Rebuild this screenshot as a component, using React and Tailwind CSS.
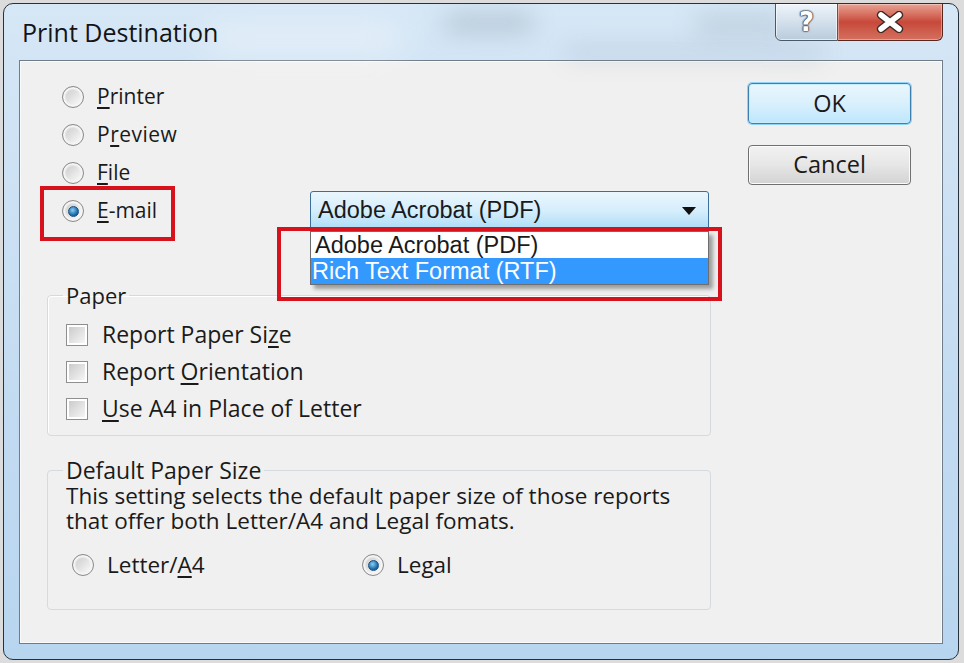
import React from "react";

const Radio = ({ checked }) => (
  <span className="relative inline-flex h-[22px] w-[22px] shrink-0 items-center justify-center rounded-full border border-[#8a8a8a] bg-gradient-to-br from-[#d8d8d8] to-[#fbfbfb] shadow-[inset_0_0_0_2px_#f4f4f4]">
    <span className="h-[14px] w-[14px] rounded-full bg-gradient-to-br from-[#cfcfcf] to-[#f7f7f7]" />
    {checked && (
      <span className="absolute h-[11px] w-[11px] rounded-full bg-[radial-gradient(circle_at_40%_35%,#8ad0f5,#1f6fae_60%,#0f3f70)] border border-[#1b4f82]" />
    )}
  </span>
);

const Check = () => (
  <span className="inline-flex h-[22px] w-[22px] shrink-0 items-center justify-center border border-[#8e8f8f] bg-white">
    <span className="h-[16px] w-[16px] bg-gradient-to-br from-[#cbcbcb] to-[#f6f6f6]" />
  </span>
);

const U = ({ children }) => <span className="underline underline-offset-[3px]">{children}</span>;

export default function App() {
  return (
    <div className="h-[663px] w-[964px] bg-[#dcdcdc] p-[3px] font-['Open_Sans',sans-serif] text-[21px] text-[#1a1a1a]">
      <div className="relative flex h-[657px] w-[956px] flex-col overflow-hidden rounded-[10px] border border-[#26313b] bg-gradient-to-b from-[#d6e7f6] via-[#c6ddf2] to-[#b8d5ef]">
        {/* blurred glass background */}
        <div className="pointer-events-none absolute left-[440px] top-[12px] h-[14px] w-[90px] rounded-full bg-[#6c7c8a] opacity-40 blur-md" />
        <div className="pointer-events-none absolute left-[690px] top-[14px] h-[12px] w-[90px] rounded-full bg-[#6c7c8a] opacity-35 blur-md" />
        <div className="pointer-events-none absolute left-[560px] top-[44px] h-[10px] w-[260px] rounded-full bg-[#7b8da0] opacity-30 blur-md" />
        <div className="pointer-events-none absolute left-[200px] top-[20px] h-[30px] w-[200px] rounded-full bg-white opacity-40 blur-lg" />

        {/* title bar */}
        <div className="relative h-[56px] shrink-0">
          <div className="ml-[18px] mt-[13px] text-[25px] leading-[30px] text-[#141414]">Print Destination</div>
          <div className="absolute right-[15px] top-[-1px] flex h-[38px]">
            <div className="flex w-[63px] items-center justify-center rounded-bl-[6px] border border-[#4b5a68] bg-gradient-to-b from-[#eef4fa] via-[#d3e0ec] to-[#b9cbdb] shadow-[inset_0_0_0_1px_rgba(255,255,255,0.6)]">
              <span className="font-['DejaVu_Sans',sans-serif] text-[26px] font-bold leading-none text-white [text-shadow:0_0_1px_#2d3a46,0_0_1px_#2d3a46,0_0_2px_#2d3a46,0_0_2px_#2d3a46]">?</span>
            </div>
            <div className="flex w-[105px] items-center justify-center rounded-br-[6px] border border-l-0 border-[#5a2620] bg-gradient-to-b from-[#e8a293] via-[#c7483a] to-[#d4705e] shadow-[inset_0_0_0_1px_rgba(255,255,255,0.35)]">
              <svg width="34" height="22" viewBox="0 0 34 22">
                <path d="M8 4 L26 18 M26 4 L8 18" stroke="#3b2a28" strokeWidth="8.5" strokeLinecap="round" />
                <path d="M8 4 L26 18 M26 4 L8 18" stroke="#ffffff" strokeWidth="5.5" strokeLinecap="round" />
              </svg>
            </div>
          </div>
        </div>

        {/* client area */}
        <div className="mx-[15px] mb-[15px] flex-1 border border-[#6f7d8a] bg-[#f0f0f0] shadow-[inset_0_0_0_1px_#fafafa]">
          <div className="flex items-start">
            <div className="flex-1 pl-[42px] pt-[17px]">
              <div className="flex h-[38px] items-center gap-[13px]">
                <Radio />
                <span>
                  <U>P</U>rinter
                </span>
              </div>
              <div className="flex h-[38px] items-center gap-[13px]">
                <Radio />
                <span className="tracking-[0.5px]">
                  P<U>r</U>eview
                </span>
              </div>
              <div className="flex h-[38px] items-center gap-[13px]">
                <Radio />
                <span>
                  <U>F</U>ile
                </span>
              </div>
              <div className="relative flex h-[38px] items-center">
                <div className="absolute left-[-22px] top-[-6px] h-[55px] w-[135px] border-[4px] border-[#d8121c]" />
                <div className="flex w-[248px] items-center gap-[13px]">
                  <Radio checked />
                  <span>
                    <U>E</U>-mail
                  </span>
                </div>
                <div className="relative">
                  <div className="flex h-[40px] w-[399px] items-center justify-between rounded-[3px] border border-[#3c6f98] bg-gradient-to-b from-[#eaf6fd] via-[#d5eefc] to-[#a9dbf6] pl-[7px] pr-[12px] font-['Liberation_Sans',sans-serif] text-[23.5px]">
                    <span>Adobe Acrobat (PDF)</span>
                    <svg width="14" height="8" viewBox="0 0 14 8">
                      <path d="M0 0 H14 L7 8 Z" fill="#111" />
                    </svg>
                  </div>
                  <div className="absolute left-0 top-full z-10 w-[399px] border border-[#6d6d6d] bg-white font-['Liberation_Sans',sans-serif] text-[23.5px] shadow-[4px_4px_4px_rgba(0,0,0,0.35)]">
                    <div className="h-[26px] pl-[4px] leading-[26px]">Adobe Acrobat (PDF)</div>
                    <div className="h-[26px] bg-[#3399ff] pl-[1px] leading-[26px] text-white">Rich Text Format (RTF)</div>
                  </div>
                  <div className="absolute left-[-33px] top-[36px] z-20 h-[74px] w-[445px] border-[4px] border-[#d8121c]" />
                </div>
              </div>
            </div>
            <div className="flex flex-col gap-[21px] pr-[31px] pt-[22px] text-[23.5px]">
              <button className="h-[41px] w-[163px] rounded-[4px] border border-[#3c7fb1] bg-gradient-to-b from-[#eaf6fd] via-[#d9f0fc] to-[#bee6fd] shadow-[0_0_0_1px_#8fd3f7,inset_0_0_0_1px_#c8ecfc]">
                OK
              </button>
              <button className="h-[40px] w-[163px] rounded-[4px] border border-[#707070] bg-gradient-to-b from-[#f2f2f2] via-[#e6e6e6] to-[#d3d3d3] shadow-[inset_0_0_0_1px_#fbfbfb]">
                Cancel
              </button>
            </div>
          </div>

          <fieldset className="ml-[27px] mt-[53px] w-[664px] rounded-[4px] border border-[#d3dbe1] pb-[8px] pl-[18px] pt-[9px] text-[23px] shadow-[inset_1px_1px_0_#fff]">
            <legend className="-ml-[3px] px-[3px] text-[22px] leading-[24px]">Paper</legend>
            {[
              <>Report Paper Si<U>z</U>e</>,
              <>Report <U>O</U>rientation</>,
              <><U>U</U>se A4 in Place of Letter</>,
            ].map((t, i) => (
              <div key={i} className="flex h-[37px] items-center gap-[14px]">
                <Check />
                <span>{t}</span>
              </div>
            ))}
          </fieldset>

          <fieldset className="ml-[27px] mt-[22px] w-[664px] rounded-[4px] border border-[#d3dbe1] pb-[29px] pl-[18px] pt-[1px] text-[22.5px]">
            <legend className="-ml-[3px] px-[3px] text-[23px] leading-[24px]">Default Paper Size</legend>
            <p className="leading-[25px]">
              This setting selects the default paper size of those reports
              <br />
              that offer both Letter/A4 and Legal fomats.
            </p>
            <div className="mt-[17px] flex h-[30px] items-center">
              <div className="ml-[6px] flex w-[290px] items-center gap-[13px]">
                <Radio />
                <span>
                  Letter/<U>A</U>4
                </span>
              </div>
              <div className="flex items-center gap-[13px]">
                <Radio checked />
                <span>
                  Le<U>g</U>al
                </span>
              </div>
            </div>
          </fieldset>
        </div>
      </div>
    </div>
  );
}
